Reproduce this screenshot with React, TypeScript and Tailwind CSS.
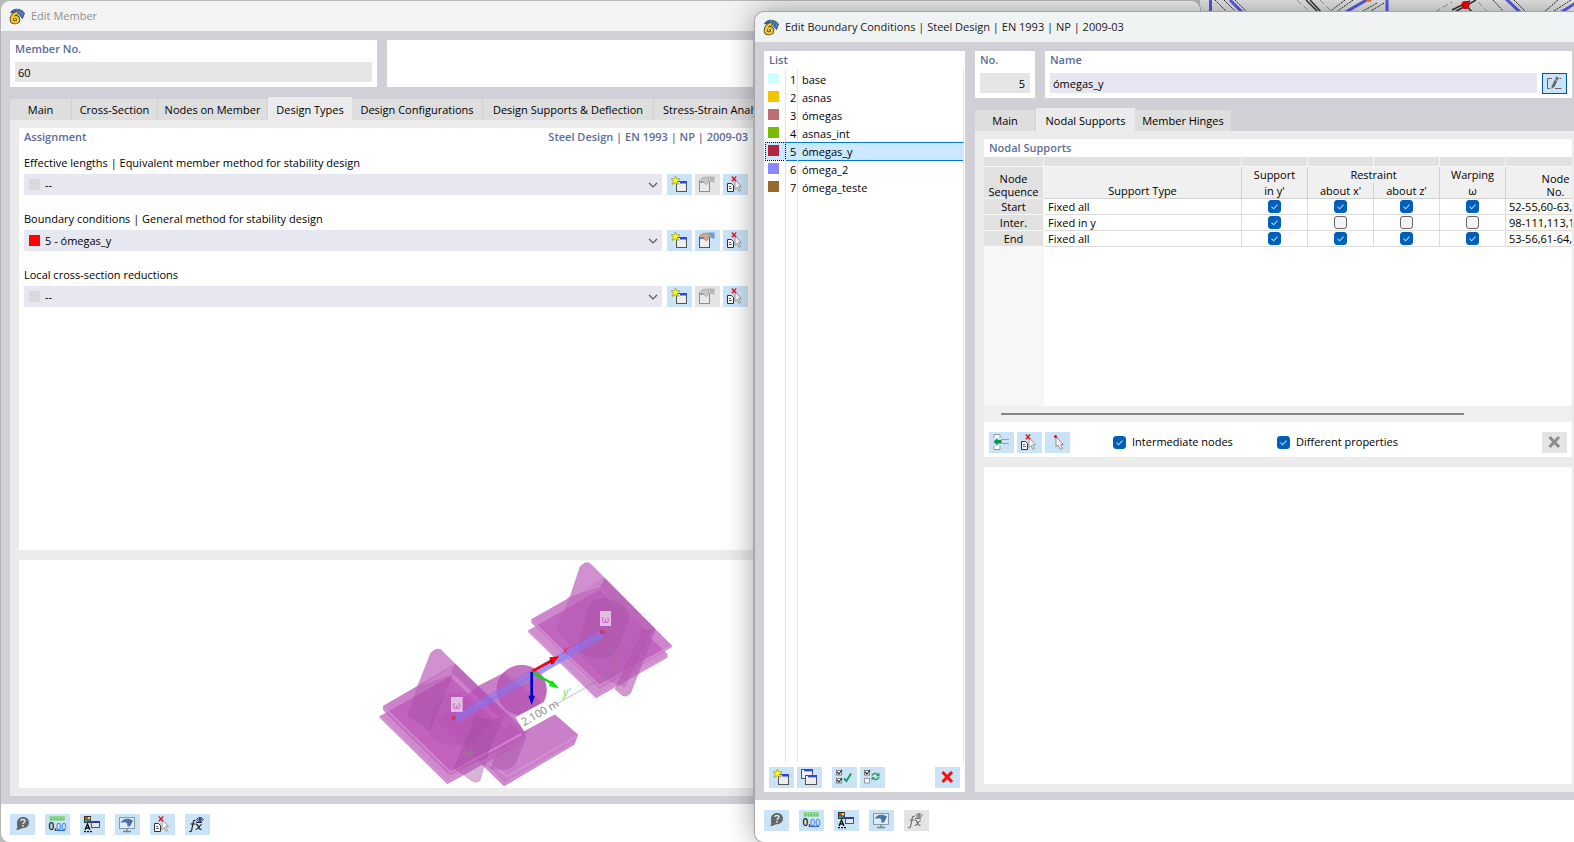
import type { ReactNode } from "react";

type IconProps = { muted?: boolean };

function Glyph({ children, muted }: { children: ReactNode; muted?: boolean }) {
  return (
    <svg viewBox="0 0 25 21" className={muted ? "h-[21px] w-[25px] opacity-60 grayscale" : "h-[21px] w-[25px]"} aria-hidden="true">
      {children}
    </svg>
  );
}

function NewIcon() {
  return (
    <Glyph>
      <rect x="9.500" y="7.500" width="10" height="10" fill="#eee" stroke="#555" />
      <rect x="13" y="7" width="7" height="2.500" fill="#2b45e0" />
      <path d="M8.500 2 L9.700 4.800 L13 4.800 L10.600 7 L12 10.500 L8.500 8.700 L5 10.500 L6.400 7 L4 4.800 L7.300 4.800 Z" fill="#ffff00" stroke="#8a8a20" strokeWidth=".6" />
    </Glyph>
  );
}

function EditIcon({ muted }: IconProps) {
  return (
    <Glyph muted={muted}>
      <rect x="4.500" y="7.500" width="10" height="10" fill="#eee" stroke="#555" />
      <rect x="5" y="7" width="4" height="2" fill="#5878d0" />
      <path d="M4.500 6 L8 3.500 L14 3 L14 7.500 L12 10.500 L10 10 L8.500 7.500 L5 7.500 Z" fill="#d2ab8a" stroke="#8b6c55" strokeWidth=".6" />
      <path d="M14 2.500 L19.500 2.500 L19.500 9 L15.500 7.500 Z" fill="#6f9bd6" />
    </Glyph>
  );
}

function RedCross() {
  return <path d="M8.800 2.500 L13.200 7.300 M13.200 2.500 L8.800 7.300" stroke="#e0141c" strokeWidth="1.300" />;
}

function PickIcon() {
  return (
    <Glyph>
      <path d="M12 5.500 V15.500 L14 13.500 L16 17.300 L17.500 16.600 L15.700 12.700 H18.500 Z" fill="#f7f7f7" stroke="#888" strokeWidth=".8" />
      <path d="M4.500 9.500 H8.500 L10.500 11.500 V17.500 H4.500 Z" fill="#fff" stroke="#333" />
      <path d="M6 12.500 H8 M6 14.500 H9" stroke="#333" strokeWidth=".8" />
      <RedCross />
    </Glyph>
  );
}

function HelpIcon() {
  return (
    <Glyph>
      <path d="M13 3 C17 3 19 5.500 19 8.600 C19 12 16.500 14.200 13 14.200 C11 14.200 10 15.800 6 16 C7.800 14.500 7 12.500 7 9 C7 5.500 9.500 3 13 3 Z" fill="#666" />
      <path d="M10.900 7 C11 5 15 4.800 15 7 C15 8.500 13 8.500 13 10" stroke="#d5e6f5" strokeWidth="1.500" fill="none" />
      <rect x="12.200" y="11" width="1.600" height="1.600" fill="#d5e6f5" />
    </Glyph>
  );
}

function UnitsIcon() {
  return (
    <Glyph>
      <rect x="4.500" y="2" width="15.500" height="4.500" fill="#8bd88b" />
      <path d="M6.500 4.500 V6.500 M9.500 4.500 V6.500 M12.500 4.500 V6.500 M15.500 4.500 V6.500 M18 4.500 V6.500" stroke="#57a557" strokeWidth=".8" />
      <text x="3.500" y="15.500" fontSize="10" fontFamily="Open Sans, sans-serif" fontWeight="600" fill="#111">0,</text>
      <text x="11" y="15.500" fontSize="9" fontFamily="Open Sans, sans-serif" fill="#2c62d6">00</text>
      <path d="M11 16.500 H20" stroke="#2c62d6" />
    </Glyph>
  );
}

function DisplayIcon() {
  return (
    <Glyph>
      <rect x="4" y="2" width="7" height="7" fill="#333" />
      <rect x="5" y="3" width="2.500" height="2.500" fill="#e33" />
      <rect x="7.700" y="3" width="2.500" height="2.500" fill="#ffe020" />
      <rect x="5" y="5.700" width="2.500" height="2.500" fill="#20c040" />
      <rect x="7.700" y="5.700" width="2.500" height="2.500" fill="#3060f0" />
      <path d="M5 16 L7.500 10 L10 16 M6 14 H9" stroke="#111" strokeWidth="1.300" fill="none" />
      <path d="M4 17.700 H12" stroke="#111" strokeWidth="1.200" strokeDasharray="2 1" />
      <rect x="11.500" y="7.500" width="8" height="6" fill="#e6e6e6" stroke="#556" />
      <rect x="12" y="7" width="8" height="2" fill="#2b3fa0" />
    </Glyph>
  );
}

function MonitorIcon() {
  return (
    <Glyph>
      <rect x="4.500" y="3.500" width="15" height="11" fill="#dcebf7" stroke="#8898a4" />
      <path d="M12 14.500 V17.500 M8 17.500 H16" stroke="#77858f" strokeWidth="1.300" />
      <path d="M5.500 8.500 C8 4.500 13 3.500 18 6.500 L15 12.500 L12.500 12.500 L12 9 C10 7.500 7.500 8.500 5.500 8.500 Z" fill="#4e7ba8" />
      <path d="M9 8 L11 5 M12.500 9 L14 5.500 M14 11 L16.500 6.500" stroke="#2e5479" strokeWidth=".6" />
    </Glyph>
  );
}

function FormulaIcon({ muted }: IconProps) {
  return (
    <Glyph muted={muted}>
      <path d="M10.500 6.500 C8.500 5.500 8.300 8 7.900 10 L6.800 15.500 C6.500 17.500 5.500 18 4.200 17.300 M5.500 10 H10.500" stroke="#222" strokeWidth="1.200" fill="none" />
      <path d="M11 10.500 C13.500 9 13.500 17 16.500 15 M17 10.500 C14.500 10 13.500 16 10.700 15.500 M11 8.300 H17" stroke="#222" strokeWidth="1.200" fill="none" />
      <path d="M11.500 5.500 Q15 1.500 18.500 5.500 Q15 9 11.500 5.500 Z" fill="#e5e8ff" stroke="#224" strokeWidth=".9" />
      <circle cx="15" cy="5.400" r="1.600" fill="#333a9a" />
    </Glyph>
  );
}

function CopyIcon() {
  return (
    <Glyph>
      <rect x="4.500" y="2.500" width="11" height="9" fill="#f0f0f0" stroke="#555" />
      <rect x="7" y="2" width="9" height="2.300" fill="#2b45e0" />
      <rect x="8.500" y="8.500" width="11" height="9" fill="#eee" stroke="#555" />
      <rect x="11" y="8" width="9" height="2.300" fill="#2b45e0" />
    </Glyph>
  );
}

function CheckAllIcon() {
  return (
    <Glyph>
      <rect x="4.500" y="3.500" width="5" height="4.500" fill="#fff" stroke="#666" strokeWidth=".8" />
      <rect x="4.500" y="11.500" width="5" height="4.500" fill="#fff" stroke="#666" strokeWidth=".8" />
      <path d="M5 5 L7 7 L10 3 M5 13 L7 15 L10 11" stroke="#222" strokeWidth="1.100" fill="none" />
      <path d="M12 11.500 L14.500 14 L19 6.500" stroke="#12a055" strokeWidth="2" fill="none" />
    </Glyph>
  );
}

function InvertIcon() {
  return (
    <Glyph>
      <rect x="4.500" y="3.500" width="5" height="4.500" fill="#fff" stroke="#666" strokeWidth=".8" />
      <rect x="4.500" y="11.500" width="5" height="4.500" fill="#f6faff" stroke="#888" strokeWidth=".8" />
      <path d="M5 5 L7 7 L10 3" stroke="#222" strokeWidth="1.100" fill="none" />
      <path d="M12 8.500 C13 6 16.500 6 18.500 8 M19 10 C18 13 14.500 13 12.500 11.200" stroke="#27a05c" strokeWidth="1.500" fill="none" />
      <path d="M19.500 5.500 V9.300 H16 Z M11.500 10 H15 L11.500 13.500 Z" fill="#27a05c" />
    </Glyph>
  );
}

function CloseIcon({ muted }: IconProps) {
  return (
    <Glyph>
      <path d="M7.500 5 L17 15 M17 5 L7.500 15" stroke={muted ? "#8c8c8c" : "#ff0a0a"} strokeWidth="3" />
    </Glyph>
  );
}

function InsertRowIcon() {
  return (
    <Glyph>
      <path d="M5 6 V2.500 H11 V6 M5 14 V17.500 H11 V14" fill="#fff" stroke="#999" />
      <path d="M4.500 9.700 L8.500 6 V8 H12.500 V11.500 H8.500 V13.500 Z" fill="#0b9444" />
      <path d="M20 7.500 H12.500 V11.500 H20" fill="none" stroke="#6cba8c" />
    </Glyph>
  );
}

function NodePickIcon() {
  return (
    <Glyph>
      <path d="M11 5 V15 L13 13 L15.500 17.500 L17.500 16.500 L15.500 12.500 H18.500 Z" fill="#f4f4f4" stroke="#888" strokeWidth=".9" />
      <circle cx="10.500" cy="4.500" r="1.600" fill="#e0141c" />
    </Glyph>
  );
}

function RenameIcon() {
  return (
    <svg viewBox="0 0 23 19" className="h-[19px] w-[23px]" aria-hidden="true">
      <path d="M9 4.500 H4.500 V14.500 H7 M12 14.500 H18.500 M16.500 4.500 H18.500" stroke="#666" fill="none" />
      <path d="M8.200 15 L9 11.500 L13.300 2.500 L15.800 3.700 L11.500 12.700 Z" fill="#666" />
      <path d="M12 5.500 L14.500 6.700" stroke="#cae3f7" strokeWidth=".8" />
    </svg>
  );
}

function AppIcon() {
  return (
    <svg viewBox="0 0 16 17" className="h-[17px] w-4 shrink-0" aria-hidden="true">
      <path d="M1.500 4.500 C4 .5 11 -.5 15.500 5 L13.500 10.500 L9 5.500 Z" fill="#3c67a5" stroke="#26415f" strokeWidth=".8" />
      <path d="M8.500 1 L7.500 5 M11.500 2 L10.500 7 M14 4 L12.500 9" stroke="#88a7cf" strokeWidth=".7" />
      <path d="M8.500 5 C5 5.500 2.500 8.500 2.700 12 C2.900 15 9.300 15.300 9.300 11.700 C9.300 9 6.500 8.500 4.500 10" fill="none" stroke="#4a4326" strokeWidth="4" />
      <path d="M8.500 5 C5 5.500 2.500 8.500 2.700 12 C2.900 15 9.300 15.300 9.300 11.700 C9.300 9 6.500 8.500 4.500 10" fill="none" stroke="#f6c728" strokeWidth="2.400" />
    </svg>
  );
}

function Tool({ label, disabled, outlined, children }: { label: string; disabled?: boolean; outlined?: boolean; children: ReactNode }) {
  const tone = disabled ? "bg-[#e4e4e4]" : "bg-[#cae3f7]";
  const edge = outlined ? "border border-[#005499]" : "";
  return (
    <button type="button" aria-label={label} disabled={disabled} className={`flex h-[21px] w-[25px] shrink-0 items-center justify-center ${tone} ${edge}`}>
      {children}
    </button>
  );
}

function Heading({ children }: { children: ReactNode }) {
  return <h2 className="text-[11px] leading-[18px] font-semibold text-[#5b6c99]">{children}</h2>;
}

function Tabs({ items, active }: { items: { name: string; width: string }[]; active: string }) {
  return (
    <div role="tablist" className="flex h-[23px] shrink-0 items-end">
      {items.map((t) => (
        <button
          key={t.name}
          type="button"
          role="tab"
          aria-selected={t.name === active}
          className={`${t.width} shrink-0 text-center whitespace-nowrap ${
            t.name === active ? "h-[23px] bg-[#ebebeb] pt-1" : "h-[21px] border-r border-[#d1d0d6] bg-[#dedede] pt-0.5"
          }`}
        >
          {t.name}
        </button>
      ))}
    </div>
  );
}

function Combo({ id, label, value, swatch, editable }: { id: string; label: string; value: string; swatch: string; editable?: boolean }) {
  return (
    <div className="flex flex-col gap-0.5">
      <label htmlFor={id} className="leading-[18px]">{label}</label>
      <div className="flex gap-[3px]">
        <div className="mr-0.5 grid h-[21px] flex-1 items-center bg-[#e7e7f1]">
          <span className={`z-10 ml-[5px] size-[11px] [grid-area:1/1] ${swatch}`} />
          <select id={id} className="h-full w-full appearance-none bg-transparent pt-px pl-[21px] [grid-area:1/1]">
            <option>{value}</option>
          </select>
          <svg viewBox="0 0 10 6" className="pointer-events-none mr-1 h-1.5 w-2.5 justify-self-end [grid-area:1/1]" aria-hidden="true">
            <path d="M1 1 L5 5 L9 1" fill="none" stroke="#555" strokeWidth="1.100" />
          </svg>
        </div>
        <Tool label={`New: ${label}`}><NewIcon /></Tool>
        <Tool label={`Edit: ${label}`} disabled={!editable}><EditIcon muted={!editable} /></Tool>
        <Tool label={`Select: ${label}`}><PickIcon /></Tool>
      </div>
    </div>
  );
}

function Check({ id, label, checked }: { id?: string; label?: string; checked: boolean }) {
  return (
    <span className="inline-grid size-[13px] align-top">
      <input
        id={id}
        type="checkbox"
        aria-label={label}
        defaultChecked={checked}
        className="peer size-[13px] appearance-none rounded-[3px] border border-[#666] bg-[#f3f3f3] [grid-area:1/1] checked:border-[#005fb8] checked:bg-[#005fb8]"
      />
      <svg viewBox="0 0 13 13" className="pointer-events-none hidden size-[13px] [grid-area:1/1] peer-checked:block" aria-hidden="true">
        <path d="M3.500 6.700 L5.600 8.800 L9.500 4.700" fill="none" stroke="#b9d8f2" strokeWidth="1.100" />
      </svg>
    </span>
  );
}

function Scene() {
  return (
    <svg viewBox="0 0 960 750" className="-mt-[10px] ml-[351px] h-[250px] w-[320px]" role="img" aria-label="Member with nodal supports">
      <g stroke="#a347a2" strokeWidth="2">
        <path d="M474 242 L690 120 L892 312 L892 322 L678 444 Z" fill="#bd62bb" fillOpacity=".72" strokeOpacity=".35" />
        <path d="M485 208 L704 84 L904 286 L904 292 L688 414 L485 218 Z" fill="#bb58b8" fillOpacity=".72" strokeOpacity=".4" />
        <path d="M485 213 L688 408 L904 288" fill="none" stroke="#d795d6" strokeWidth="7" strokeOpacity=".7" />
        <path d="M476 244 L678 438 L890 320" fill="none" stroke="#d795d6" strokeWidth="7" strokeOpacity=".7" />
        <path d="M630 50 Q650 30 662 42 L704 84 L590 146 L600 140 Z" fill="#bb5cb8" fillOpacity=".68" strokeOpacity=".3" />
        <path d="M704 84 L856 236 L835 260 L690 112 Z" fill="#a848a6" fillOpacity=".45" stroke="none" />
        <path d="M600 140 L690 112 L838 250 L765 412 L700 385 L560 240 Z" fill="#b455b2" fillOpacity=".4" strokeOpacity=".15" />
        <path d="M818 244 L856 238 L782 430 Q765 445 755 435 L735 418 Z" fill="#b455b2" fillOpacity=".6" strokeOpacity=".3" />
        <path d="M660 160 Q700 135 750 158 Q782 180 774 215 L736 310 Q700 340 645 312 Q620 300 628 270 Z" fill="#9a4699" fillOpacity=".25" strokeOpacity=".15" />
      </g>
      <g stroke="#a347a2" strokeWidth="2">
        <path d="M325 408 L408 366 L624 554 L612 584 L402 708 L200 510 Z" fill="#bd5fbb" fillOpacity=".8" strokeOpacity=".4" />
        <path d="M350 650 L402 702 L614 580 M360 640 L412 680 L622 558" fill="none" stroke="#d795d6" strokeWidth="6" strokeOpacity=".7" />
        <path d="M470 560 L435 645 Q410 668 360 655 L420 520 Z" fill="#9a4699" fillOpacity=".35" stroke="none" />
        <circle cx="455" cy="420" r="75" fill="#b759b5" fillOpacity=".9" strokeOpacity=".3" />
        <path d="M400 372 Q420 348 455 346 Q495 347 515 376 L450 410 Z" fill="#cb86c9" fillOpacity=".4" stroke="none" />
        <path d="M28 500 L240 380 L446 576 L446 582 L232 702 Z" fill="#bd62bb" fillOpacity=".75" strokeOpacity=".35" />
        <path d="M40 468 L256 342 L470 548 L460 560 L240 674 L40 480 Z" fill="#bd55ba" fillOpacity=".75" strokeOpacity=".4" />
        <path d="M42 473 L242 668 L455 552" fill="none" stroke="#d795d6" strokeWidth="7" strokeOpacity=".65" />
        <path d="M32 502 L232 696 L350 628" fill="none" stroke="#d795d6" strokeWidth="7" strokeOpacity=".65" />
        <path d="M182 310 Q200 290 214 300 L256 342 L142 410 Z" fill="#bb5cb8" fillOpacity=".68" strokeOpacity=".3" />
        <path d="M256 342 L405 490 L385 500 L244 366 Z" fill="#a848a6" fillOpacity=".4" stroke="none" />
        <path d="M142 410 L112 496 L180 545 L250 372 Z" fill="#9a4699" fillOpacity=".3" stroke="none" />
        <path d="M318 500 L365 512 L405 495 L360 590 L330 692 Q315 702 305 692 L252 655 Z" fill="#a34aa1" fillOpacity=".42" strokeOpacity=".3" />
        <path d="M192 475 Q215 425 270 430 L370 510 L300 585 Q220 590 186 565 Q168 540 192 475 Z" fill="#9a4699" fillOpacity=".16" strokeOpacity=".12" />
      </g>
      <path d="M248 497 L694 240 L704 262 L262 518 Z" fill="#8a78ee" fillOpacity=".55" />
      <path d="M500 352 L590 300 L600 322 L515 372 Z" fill="#8f8fff" fillOpacity=".6" />
      <path d="M250 497 L696 240 M258 510 L704 252" stroke="#6f6af2" strokeWidth="2" strokeOpacity=".5" />
      <g stroke="#8d7f8d" strokeWidth="2" fill="#8d7f8d">
        <path d="M282 545 V622 M728 290 V368 M285 617 L728 367" fill="none" strokeOpacity=".75" />
        <path d="M284 619 L304 600 L309 610 Z M728 367 L708 385 L703 376 Z" stroke="none" />
      </g>
      <path d="M436 502 L540 446 L564 488 L462 544 Z" fill="#fff" />
      <text transform="translate(462 529) rotate(-30)" fontSize="33" fontFamily="Open Sans, sans-serif" fill="#858585">2.100 m</text>
      <g fill="#ead7ea" fillOpacity=".8">
        <rect x="243" y="441" width="35" height="45" />
        <rect x="690" y="183" width="33" height="45" />
      </g>
      <g fontSize="30" fontFamily="Open Sans, sans-serif" fill="#d84fd6" textAnchor="middle">
        <text x="260" y="476">ω</text>
        <text x="706" y="218">ω</text>
      </g>
      <rect x="245" y="498" width="12" height="12" fill="#cf365f" />
      <rect x="691" y="240" width="12" height="12" fill="#cf365f" />
      <path d="M486 364 L546 332" stroke="#f00" strokeWidth="8" />
      <path d="M538 322 L568 319 L549 343 Z" fill="#f00" />
      <path d="M538 322 L549 343 L543 343 Z" fill="#800" />
      <path d="M486 366 L545 400" stroke="#0d0" strokeWidth="7" />
      <path d="M546 391 L567 415 L536 408 Z" fill="#0e0" />
      <path d="M485 366 V440" stroke="#0000c8" strokeWidth="8" />
      <path d="M475 437 H495 L485 465 Z" fill="#0000c8" />
      <text x="579" y="313" fontSize="31" fontFamily="Open Sans, sans-serif" fill="#e02445">x'</text>
      <text x="580" y="438" fontSize="31" fontFamily="Open Sans, sans-serif" fontStyle="italic" fill="#4de04d">y'</text>
    </svg>
  );
}

function Drawing() {
  return (
    <svg viewBox="1200 0 374 14" className="absolute top-0 right-0 h-[14px] w-[374px] bg-[#e9e9e9]" aria-hidden="true">
      <g stroke="#5a5aee" strokeWidth="3" fill="none">
        <path d="M1210.500 0 V14 M1387 0 V14 M1230 0 L1244 14 M1370 -2 L1344 13 M1506 -1 L1521 13 M1577 2 L1560 13" />
      </g>
      <g stroke="#222" strokeWidth="1" fill="none" strokeDasharray="2 1">
        <path d="M1215 0 L1228 13 M1224 0 L1237 13 M1235 0 L1248 13 M1345 0 L1328 13 M1353 0 L1335 13 M1377 3 L1358 14 M1384 3 L1366 14 M1493 0 L1506 14 M1514 0 L1528 14 M1558 0 L1543 13 M1571 0 L1551 13" />
      </g>
      <path d="M1306 0 L1320 14 M1310 0 L1323 14 M1453 13 L1476 0 M1463 2 L1473 13 M1452 10 L1470 1" stroke="#333" strokeWidth="1.500" fill="none" />
      <path d="M1297 0 L1312 14 M1320 0 L1332 12 M1435 12 L1452 2 M1478 2 L1488 12" stroke="#999" fill="none" strokeDasharray="6 3" />
      <circle cx="1465.500" cy="5" r="4" fill="#f00000" />
      <circle cx="1369" cy="-1" r="3" fill="#f37e20" />
    </svg>
  );
}

const conditions = [
  { no: 1, name: "base", color: "bg-[#ccffff]" },
  { no: 2, name: "asnas", color: "bg-[#f5c400]" },
  { no: 3, name: "ómegas", color: "bg-[#b87070]" },
  { no: 4, name: "asnas_int", color: "bg-[#7aba00]" },
  { no: 5, name: "ómegas_y", color: "bg-[#b32440]" },
  { no: 6, name: "ómega_2", color: "bg-[#8888ff]" },
  { no: 7, name: "ómega_teste", color: "bg-[#966a2c]" },
];

const supports = [
  { seq: "Start", type: "Fixed all", checks: [true, true, true, true], nodes: "52-55,60-63," },
  { seq: "Inter.", type: "Fixed in y", checks: [true, false, false, false], nodes: "98-111,113,1" },
  { seq: "End", type: "Fixed all", checks: [true, true, true, true], nodes: "53-56,61-64," },
];

const checkNames = ["Support in y'", "Restraint about x'", "Restraint about z'", "Warping ω"];

function SupportTable() {
  const head = "border-r border-[#d2d2d2] p-0 text-center font-normal";
  return (
    <table className="w-[622px] table-fixed border-separate border-spacing-0 leading-[15px]">
      <colgroup>
        <col className="w-[60px]" />
        <col className="w-[198px]" />
        <col className="w-[66px]" />
        <col className="w-[66px]" />
        <col className="w-[66px]" />
        <col className="w-[66px]" />
        <col className="w-[100px]" />
      </colgroup>
      <thead className="bg-[#f0f0f0]">
        <tr aria-hidden="true">
          {[0, 1, 2, 3, 4, 5, 6].map((i) => (
            <td key={i} className="h-[10px] border-r border-b border-[#f7f7f7] bg-[#e1e1e1] p-0" />
          ))}
        </tr>
        <tr className="h-4">
          <th rowSpan={2} className="h-8 border-r border-b border-[#f7f7f7] bg-[#e1e1e1] p-0 align-bottom leading-[13px] font-normal">Node<br />Sequence</th>
          <th rowSpan={2} className={`${head} border-b align-bottom`}>Support Type</th>
          <th className={`${head} align-top`}>Support</th>
          <th colSpan={2} className={`${head} align-top`}>Restraint</th>
          <th className={`${head} align-top`}>Warping</th>
          <th rowSpan={2} className={`${head} border-b align-bottom leading-[13px]`}>Node<br />No.</th>
        </tr>
        <tr className="h-4">
          <th className={`${head} border-b`}>in y'</th>
          <th className={`${head} border-b`}>about x'</th>
          <th className={`${head} border-b`}>about z'</th>
          <th className={`${head} border-b`}>ω</th>
        </tr>
      </thead>
      <tbody>
        {supports.map((s) => (
          <tr key={s.seq} className="h-4">
            <th className="border-r border-b border-[#f7f7f7] bg-[#e1e1e1] p-0 font-normal">{s.seq}</th>
            <td className="border-r border-b border-[#dcdcdc] p-0 pl-1">{s.type}</td>
            {s.checks.map((c, i) => (
              <td key={checkNames[i]} className="h-4 border-r border-b border-[#dcdcdc] p-0 text-center align-middle leading-[0px]">
                <Check label={`${s.seq} ${checkNames[i]}`} checked={c} />
              </td>
            ))}
            <td className="border-b border-[#dcdcdc] bg-[#fafaf2] p-0 pl-[3px] whitespace-nowrap">{s.nodes}</td>
          </tr>
        ))}
      </tbody>
    </table>
  );
}

function MemberWindow() {
  return (
    <section className="absolute top-px bottom-0 left-0 flex w-[1201px] flex-col overflow-hidden rounded-[9px] border border-y-0 border-[#b4b4b4] bg-[#d1d0d6]">
      <header className="flex h-[30px] shrink-0 items-center gap-1.5 bg-[#f3f3f3] pr-[17px] pl-2 text-[#8f8f8f]">
        <AppIcon />
        <h1 className="flex-1">Edit Member</h1>
        <button type="button" aria-label="Maximize" className="mr-9">
          <svg viewBox="0 0 11 11" className="size-[11px]" aria-hidden="true">
            <rect x=".5" y=".5" width="10" height="10" rx="1" fill="none" stroke="#8f8f8f" />
          </svg>
        </button>
        <button type="button" aria-label="Close">
          <svg viewBox="0 0 11 11" className="size-[11px]" aria-hidden="true">
            <path d="M.5 .5 L10.500 10.500 M10.500 .5 L.5 10.500" stroke="#8f8f8f" />
          </svg>
        </button>
      </header>
      <div className="flex min-h-0 flex-1 gap-[10px] px-[9px] pt-[9px] pb-2">
        <div className="flex w-[743px] shrink-0 flex-col">
          <div className="flex h-[47px] shrink-0 gap-[10px]">
            <div className="flex w-[367px] flex-col gap-1 bg-white px-[5px]">
              <label htmlFor="member-no" className="text-[11px] leading-[18px] font-semibold text-[#5b6c99]">Member No.</label>
              <input id="member-no" readOnly defaultValue="60" className="h-5 w-full bg-[#e6e6e6] px-[3px] pt-px" />
            </div>
            <div className="flex-1 bg-white" />
          </div>
          <div className="mt-[10px] flex min-h-0 flex-1 flex-col">
            <Tabs
              active="Design Types"
              items={[
                { name: "Main", width: "w-[62px]" },
                { name: "Cross-Section", width: "w-[86px]" },
                { name: "Nodes on Member", width: "w-[110px]" },
                { name: "Design Types", width: "w-[84px]" },
                { name: "Design Configurations", width: "w-[131px]" },
                { name: "Design Supports & Deflection", width: "w-[171px]" },
                { name: "Stress-Strain Analysis", width: "w-[128px]" },
              ]}
            />
            <div className="flex min-h-0 flex-1 flex-col gap-[10px] bg-[#ebebeb] pt-2 pb-2 pl-[9px]">
              <div className="flex min-h-0 flex-[422] flex-col bg-white px-[5px]">
                <div className="flex justify-between">
                  <Heading>Assignment</Heading>
                  <Heading>Steel Design | EN 1993 | NP | 2009-03</Heading>
                </div>
                <div className="mt-2 flex flex-col gap-[15px]">
                  <Combo id="lengths" label="Effective lengths | Equivalent member method for stability design" value="--" swatch="bg-[#d9d9d9]" />
                  <Combo id="boundary" label="Boundary conditions | General method for stability design" value="5 - ómegas_y" swatch="bg-[#ff0000]" editable />
                  <Combo id="reductions" label="Local cross-section reductions" value="--" swatch="bg-[#d9d9d9]" />
                </div>
              </div>
              <div className="min-h-0 flex-[228] bg-white">
                <Scene />
              </div>
            </div>
          </div>
        </div>
        <div className="mt-[80px] flex-1 bg-[#ebebeb]" />
      </div>
      <footer className="flex h-[38px] shrink-0 gap-[10px] bg-white pt-[10px] pl-[9px]">
        <Tool label="Help"><HelpIcon /></Tool>
        <Tool label="Units"><UnitsIcon /></Tool>
        <Tool label="Display"><DisplayIcon /></Tool>
        <Tool label="View"><MonitorIcon /></Tool>
        <Tool label="Pick member"><PickIcon /></Tool>
        <Tool label="Formula"><FormulaIcon /></Tool>
      </footer>
    </section>
  );
}

function ConditionList() {
  const columns = "grid grid-cols-[21px_12px_1fr]";
  return (
    <div className="flex w-[201px] shrink-0 flex-col bg-white">
      <div className="pl-[5px]"><Heading>List</Heading></div>
      <ul className="mt-px flex min-h-0 flex-1 flex-col pr-px pl-px">
        {conditions.map((c) => {
          const on = c.no === 5;
          return (
            <li key={c.no}>
              <button type="button" aria-pressed={on} className={`${columns} h-[18px] w-full items-stretch text-left leading-[18px] ${on ? "bg-[#cce8ff]" : ""}`}>
                <span className={on ? "border border-dotted border-black pt-0.5 pl-0.5" : "border-r border-[#e4e4e4] pt-[3px] pl-[3px]"}>
                  <span className={`block size-[11px] ${c.color}`} />
                </span>
                <span className={`border-r border-r-[#e4e4e4] pl-1 ${on ? "border-y border-y-[#0078d7] leading-[17px]" : "pt-px"}`}>{c.no}</span>
                <span className={`border-r border-r-[#e4e4e4] pl-1 ${on ? "border-y border-y-[#0078d7] leading-[17px]" : "pt-px"}`}>{c.name}</span>
              </button>
            </li>
          );
        })}
        <li aria-hidden="true" className={`${columns} flex-1`}>
          <span className="border-r border-[#e4e4e4]" />
          <span className="border-r border-[#e4e4e4]" />
          <span className="border-r border-[#e4e4e4]" />
        </li>
      </ul>
      <div className="flex gap-[3px] px-[5px] pt-[5px] pb-1">
        <Tool label="New condition"><NewIcon /></Tool>
        <Tool label="Copy condition"><CopyIcon /></Tool>
        <span className="w-1" />
        <Tool label="Select all"><CheckAllIcon /></Tool>
        <Tool label="Invert selection"><InvertIcon /></Tool>
        <span className="flex-1" />
        <Tool label="Delete condition"><CloseIcon /></Tool>
      </div>
    </div>
  );
}

function BoundaryWindow() {
  return (
    <section className="absolute top-[12px] right-0 bottom-0 left-[755px] flex flex-col overflow-hidden rounded-l-[9px] bg-[#d1d0d6] shadow-[0_0_30px_rgba(0,0,0,0.4)] ring-1 ring-[#a3a5a8]">
      <header className="flex h-[30px] shrink-0 items-center gap-1.5 bg-[#eff3f4] pl-2 text-[#1a1a1a]">
        <AppIcon />
        <h1>Edit Boundary Conditions | Steel Design | EN 1993 | NP | 2009-03</h1>
      </header>
      <div className="flex min-h-0 flex-1 gap-[10px] pt-[9px] pb-2 pl-[9px]">
        <ConditionList />
        <div className="flex min-w-0 flex-1 flex-col">
          <div className="mr-0.5 flex h-[47px] shrink-0 gap-[10px]">
            <div className="flex w-[60px] flex-col gap-1 bg-white px-[5px]">
              <label htmlFor="condition-no" className="text-[11px] leading-[18px] font-semibold text-[#5b6c99]">No.</label>
              <input id="condition-no" readOnly defaultValue="5" className="h-5 w-full bg-[#e6e6e6] px-[5px] pt-px text-right" />
            </div>
            <div className="flex flex-1 flex-col gap-1 bg-white px-[5px]">
              <label htmlFor="condition-name" className="text-[11px] leading-[18px] font-semibold text-[#5b6c99]">Name</label>
              <div className="flex gap-[5px]">
                <input id="condition-name" defaultValue="ómegas_y" className="h-5 min-w-0 flex-1 bg-[#e7e7f1] px-[3px] pt-px" />
                <Tool label="Rename" outlined><RenameIcon /></Tool>
              </div>
            </div>
          </div>
          <div className="mt-[10px] flex min-h-0 flex-1 flex-col">
            <Tabs
              active="Nodal Supports"
              items={[
                { name: "Main", width: "w-[61px]" },
                { name: "Nodal Supports", width: "w-[99px]" },
                { name: "Member Hinges", width: "w-[97px]" },
              ]}
            />
            <div className="flex min-h-0 flex-1 flex-col gap-[10px] bg-[#ebebeb] pt-2 pr-0.5 pb-2 pl-[9px]">
              <div className="flex flex-[318] flex-col bg-white">
                <div className="pl-[5px]"><Heading>Nodal Supports</Heading></div>
                <div className="flex min-h-0 flex-1 flex-col overflow-hidden">
                  <SupportTable />
                  <div className="w-[60px] flex-1 bg-[#f7f7f7]" />
                </div>
                <div className="flex h-4 shrink-0 items-center bg-[#efefef] pl-[17px]">
                  <div className="h-0.5 w-[81%] bg-[#858585]" />
                </div>
                <div className="flex h-[35px] shrink-0 items-center gap-[3px] px-[5px] pt-[5px]">
                  <Tool label="Insert row"><InsertRowIcon /></Tool>
                  <Tool label="Pick row"><PickIcon /></Tool>
                  <Tool label="Pick node"><NodePickIcon /></Tool>
                  <div className="ml-10 flex w-[161px] items-center gap-1.5">
                    <Check id="intermediate" checked />
                    <label htmlFor="intermediate">Intermediate nodes</label>
                  </div>
                  <div className="flex flex-1 items-center gap-1.5">
                    <Check id="different" checked />
                    <label htmlFor="different">Different properties</label>
                  </div>
                  <Tool label="Delete row" disabled><CloseIcon muted /></Tool>
                </div>
              </div>
              <div className="min-h-0 flex-[317] bg-white" />
            </div>
          </div>
        </div>
      </div>
      <footer className="flex h-[42px] shrink-0 gap-[10px] bg-white pt-[10px] pl-[9px]">
        <Tool label="Help"><HelpIcon /></Tool>
        <Tool label="Units"><UnitsIcon /></Tool>
        <Tool label="Display"><DisplayIcon /></Tool>
        <Tool label="View"><MonitorIcon /></Tool>
        <Tool label="Formula" disabled><FormulaIcon muted /></Tool>
      </footer>
    </section>
  );
}

export default function App() {
  return (
    <main className="relative h-screen min-h-[600px] overflow-hidden bg-[#b9b9b9] font-['Open_Sans','Noto_Sans',sans-serif] text-[11px] text-black">
      <Drawing />
      <MemberWindow />
      <BoundaryWindow />
    </main>
  );
}
